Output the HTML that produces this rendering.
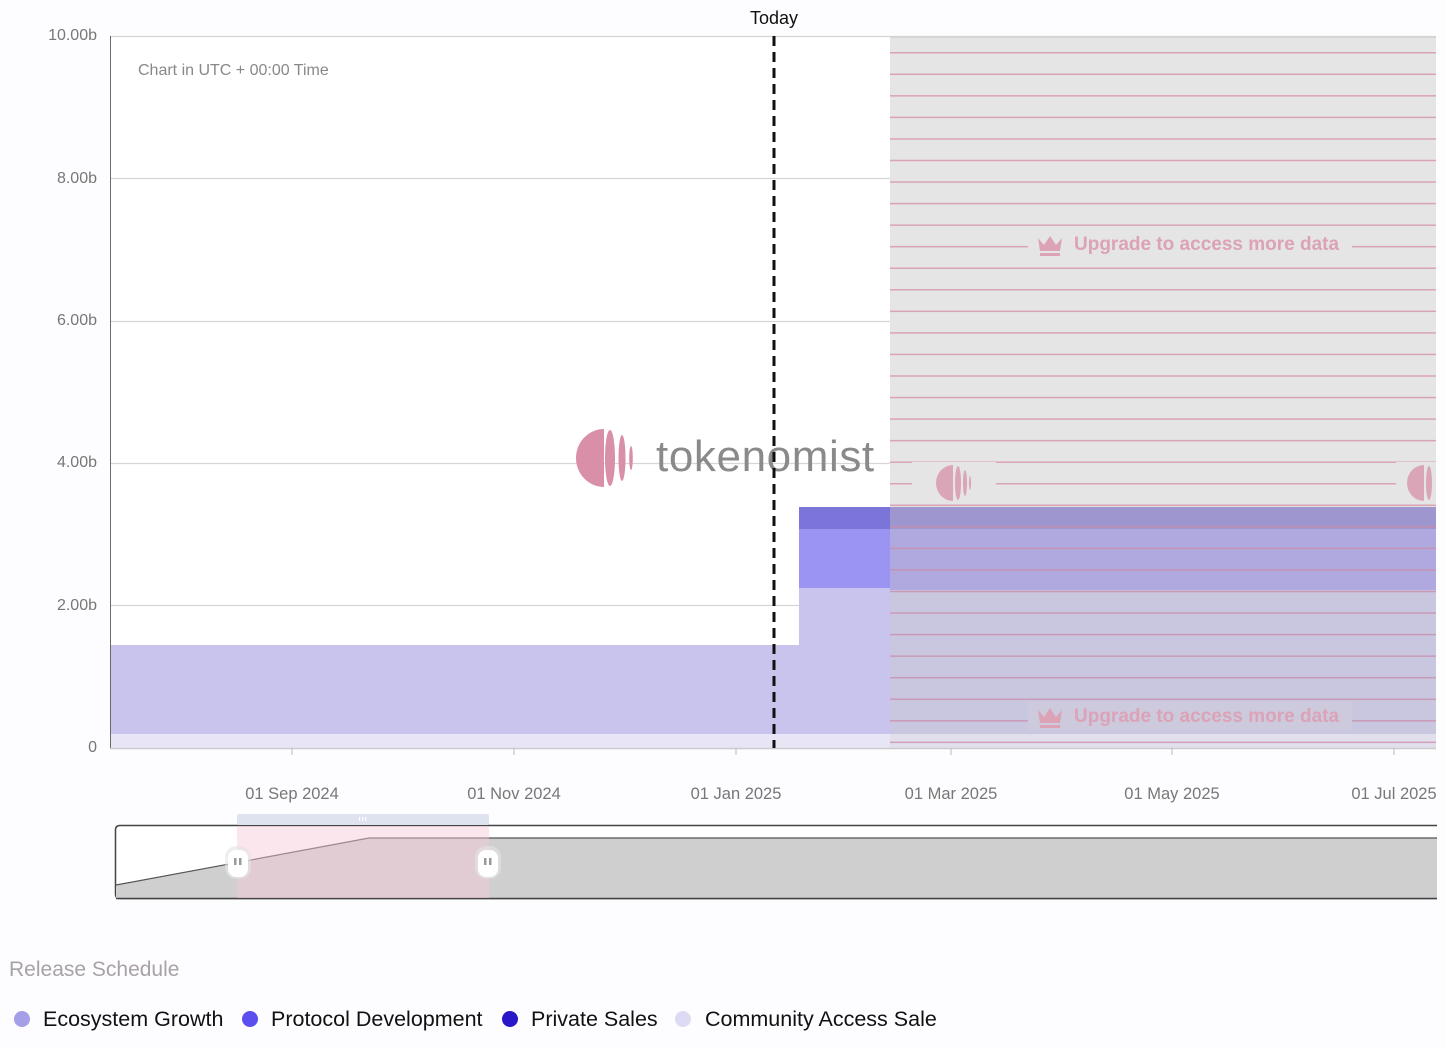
<!DOCTYPE html>
<html><head><meta charset="utf-8"><style>
html,body{margin:0;padding:0;background:#fdfcfe;}
body{width:1445px;height:1049px;overflow:hidden;font-family:"Liberation Sans",sans-serif;}
</style></head><body>
<svg width="1445" height="1049" viewBox="0 0 1445 1049" xmlns="http://www.w3.org/2000/svg" style="display:block">
<defs>
<pattern id="pl" patternUnits="userSpaceOnUse" x="0" y="52" width="10" height="21.55">
<rect x="0" y="0" width="10" height="1.5" fill="#d9a3b5"/>
</pattern>
<pattern id="pl2" patternUnits="userSpaceOnUse" x="0" y="52" width="10" height="21.55">
<rect x="0" y="0" width="10" height="1.5" fill="#c98aa6" opacity="0.75"/>
</pattern>
</defs>
<rect width="1445" height="1049" fill="#fdfcfe"/>
<rect x="110" y="36" width="1326" height="712" fill="#ffffff"/>
<g stroke="#d6d6d6" stroke-width="1.2">
<line x1="110" y1="36.5" x2="1436" y2="36.5"/>
<line x1="110" y1="178.5" x2="1436" y2="178.5"/>
<line x1="110" y1="321.5" x2="1436" y2="321.5"/>
<line x1="110" y1="463.5" x2="1436" y2="463.5"/>
<line x1="110" y1="605.5" x2="1436" y2="605.5"/>
</g>
<g font-size="16" fill="#777" text-anchor="end">
<text x="97" y="40">10.00b</text>
<text x="97" y="183">8.00b</text>
<text x="97" y="325">6.00b</text>
<text x="97" y="467">4.00b</text>
<text x="97" y="610">2.00b</text>
<text x="97" y="752">0</text>
</g>
<text x="138" y="75" font-size="16" fill="#888">Chart in UTC + 00:00 Time</text>
<rect x="110" y="645" width="689" height="89" fill="#c8c4ee"/>
<rect x="110" y="734" width="689" height="14" fill="#e8e6f6"/>
<rect x="799" y="507" width="91" height="22" fill="#7b74d9"/>
<rect x="799" y="529" width="91" height="59" fill="#9c94f3"/>
<rect x="799" y="588" width="91" height="146" fill="#c8c4ee"/>
<rect x="799" y="734" width="91" height="14" fill="#e8e6f6"/>
<rect x="890" y="36" width="546" height="712" fill="#e5e5e5"/>
<rect x="890" y="36" width="546" height="712" fill="url(#pl)"/>
<rect x="890" y="507" width="546" height="22" fill="#9e96cf"/>
<rect x="890" y="529" width="546" height="61" fill="#b0a9df"/>
<rect x="890" y="590" width="546" height="144" fill="#c9c6df"/>
<rect x="890" y="734" width="546" height="14" fill="#e2dfec"/>
<rect x="890" y="507" width="546" height="241" fill="url(#pl2)"/>
<rect x="890" y="36" width="546" height="2" fill="#d4d4d4"/>
<g>
<rect x="1028" y="230" width="324" height="28" fill="#e5e5e5"/>
<path d="M1038 238 L1044 245 L1050 236 L1056 245 L1062 238 L1060 251 L1040 251 Z" fill="#dca2b6"/>
<rect x="1040" y="253" width="20" height="3" fill="#dca2b6"/>
<text x="1074" y="250" font-size="19" fill="#dca2b6" font-weight="bold">Upgrade to access more data</text>
<rect x="1028" y="702" width="324" height="28" fill="#cdcade"/>
<path d="M1038 710 L1044 717 L1050 708 L1056 717 L1062 710 L1060 723 L1040 723 Z" fill="#dca2b6"/>
<rect x="1040" y="725" width="20" height="3" fill="#dca2b6"/>
<text x="1074" y="722" font-size="19" fill="#dca2b6" font-weight="bold">Upgrade to access more data</text>
</g>
<rect x="912" y="462" width="84" height="42" fill="#e5e5e5"/>
<g fill="#dba5b8">
<path d="M953 465 A17 18 0 0 0 953 501 Z"/><ellipse cx="958" cy="483" rx="3" ry="17"/><ellipse cx="965" cy="483" rx="2" ry="13"/><ellipse cx="970" cy="483" rx="1" ry="7"/>
</g>
<rect x="1396" y="462" width="40" height="42" fill="#e5e5e5"/>
<g fill="#dba5b8">
<path d="M1424 465 A17 18 0 0 0 1424 501 Z"/><ellipse cx="1429" cy="483" rx="3" ry="17"/>
</g>
<g fill="#d98fa8">
<path d="M604 429 A28 29 0 0 0 604 487 Z"/>
<ellipse cx="610" cy="458" rx="5" ry="28"/>
<ellipse cx="622" cy="458" rx="3.5" ry="23"/>
<ellipse cx="631" cy="458" rx="1.8" ry="12"/>
</g>
<text x="656" y="471" font-size="44" fill="#8a8a8a" letter-spacing="0.6">tokenomist</text>
<line x1="110.5" y1="36" x2="110.5" y2="748" stroke="#6a6a6a" stroke-width="1"/>
<line x1="110" y1="748.5" x2="1436" y2="748.5" stroke="#cccccc" stroke-width="1.5"/>
<g stroke="#bbb"><line x1="292" y1="748" x2="292" y2="755"/><line x1="514" y1="748" x2="514" y2="755"/><line x1="736" y1="748" x2="736" y2="755"/><line x1="951" y1="748" x2="951" y2="755"/><line x1="1172" y1="748" x2="1172" y2="755"/><line x1="1394" y1="748" x2="1394" y2="755"/></g>
<g font-size="16.5" fill="#777" text-anchor="middle">
<text x="292" y="799">01 Sep 2024</text>
<text x="514" y="799">01 Nov 2024</text>
<text x="736" y="799">01 Jan 2025</text>
<text x="951" y="799">01 Mar 2025</text>
<text x="1172" y="799">01 May 2025</text>
<text x="1394" y="799">01 Jul 2025</text>
</g>
<line x1="774" y1="36" x2="774" y2="748" stroke="#111" stroke-width="3" stroke-dasharray="10,6"/>
<text x="774" y="24" font-size="18" fill="#111" text-anchor="middle">Today</text>
<path d="M1437 825.5 L120 825.5 Q115.5 825.5 115.5 830 L115.5 894 Q115.5 898.5 120 898.5 L1437 898.5" fill="#fff" stroke="#444" stroke-width="1.5"/>
<path d="M116 885 L369 838 L1437 838 L1437 898 L116 898 Z" fill="#cfcfcf"/>
<path d="M116 885 L369 838 L1437 838" fill="none" stroke="#555" stroke-width="1.2"/>
<line x1="116" y1="898.5" x2="1437" y2="898.5" stroke="#444" stroke-width="1.5"/>
<rect x="237" y="826" width="252" height="72" fill="#f3c7d5" opacity="0.45"/>
<rect x="237" y="814" width="252" height="11" rx="2" fill="#dfe3ef"/>
<g fill="#fff"><rect x="359" y="817" width="1.2" height="4"/><rect x="362" y="817" width="1.2" height="4"/><rect x="365" y="817" width="1.2" height="4"/></g>
<rect x="225" y="846" width="26" height="33" rx="11" fill="#e4e4e4" opacity="0.6"/>
<rect x="228" y="850" width="20" height="27" rx="8" fill="#fff"/>
<rect x="234" y="858" width="2.5" height="7" fill="#999"/><rect x="239" y="858" width="2.5" height="7" fill="#999"/>
<rect x="475" y="846" width="26" height="33" rx="11" fill="#e4e4e4" opacity="0.6"/>
<rect x="478" y="850" width="20" height="27" rx="8" fill="#fff"/>
<rect x="484" y="858" width="2.5" height="7" fill="#999"/><rect x="489" y="858" width="2.5" height="7" fill="#999"/>
<text x="9" y="976" font-size="21" fill="#a8a2a8">Release Schedule</text>
<g font-size="21.5" fill="#111">
<circle cx="22" cy="1019" r="8" fill="#a59ee8"/><text x="43" y="1026">Ecosystem Growth</text>
<circle cx="250" cy="1019" r="8" fill="#5b4ff0"/><text x="271" y="1026">Protocol Development</text>
<circle cx="510" cy="1019" r="8" fill="#2a18c8"/><text x="531" y="1026">Private Sales</text>
<circle cx="683" cy="1019" r="8" fill="#dddaf3"/><text x="705" y="1026">Community Access Sale</text>
</g>
</svg>
</body></html>
